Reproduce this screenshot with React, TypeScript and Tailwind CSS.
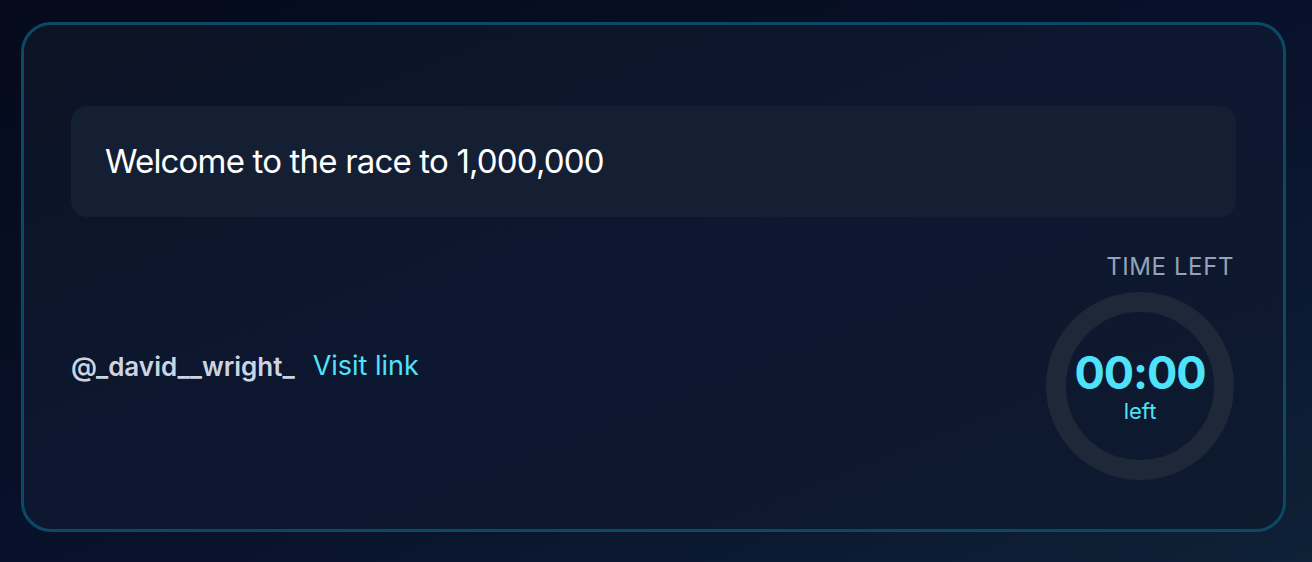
import React from 'react';

const font = { fontFamily: 'Inter, "Noto Sans", sans-serif' };

function Countdown({ time }: { time: string }) {
  return (
    <div className="flex flex-col items-end mr-[2px] mb-[2px]">
      <span className="text-[24px] leading-7 tracking-wide uppercase text-[#94a3b8]">Time left</span>
      <div className="mt-[11px] w-[188px] h-[188px] rounded-full border-[20px] border-[#1f2839] flex flex-col items-center justify-center">
        <span className="text-[45px] leading-none font-bold tracking-tight text-[#4fe3fb]">{time}</span>
        <span className="mt-1 text-[22px] leading-6 text-[#4fe3fb]">left</span>
      </div>
    </div>
  );
}

export default function App() {
  return (
    <div
      style={font}
      className="min-h-screen h-[562px] pt-[22px] pl-[21px] pr-[26px] bg-gradient-to-br from-[#050a1b] via-[#08112a] to-[#0f2136]"
    >
      <div className="h-[510px] rounded-[30px] border-[3px] border-[#0b4a64] bg-gradient-to-br from-[#0c1324] via-[#0d1730] to-[#0e1a2e] px-[47px] pt-[81px] pb-[47px] flex flex-col">
        {/* Message */}
        <div className="h-[111px] rounded-2xl bg-[#151f33] flex items-center px-[34px]">
          <p className="text-[33px] text-white tracking-tight">Welcome to the race to 1,000,000</p>
        </div>

        {/* Footer row */}
        <div className="flex-1 flex items-end justify-between">
          <div className="flex items-center gap-[18px] self-center mt-[34px]">
            <span className="text-[26px] font-semibold text-[#cbd5e1]">@_david__wright_</span>
            <a href="#" className="text-[27px] text-[#4fe3fb]">Visit link</a>
          </div>
          <Countdown time="00:00" />
        </div>
      </div>
    </div>
  );
}
